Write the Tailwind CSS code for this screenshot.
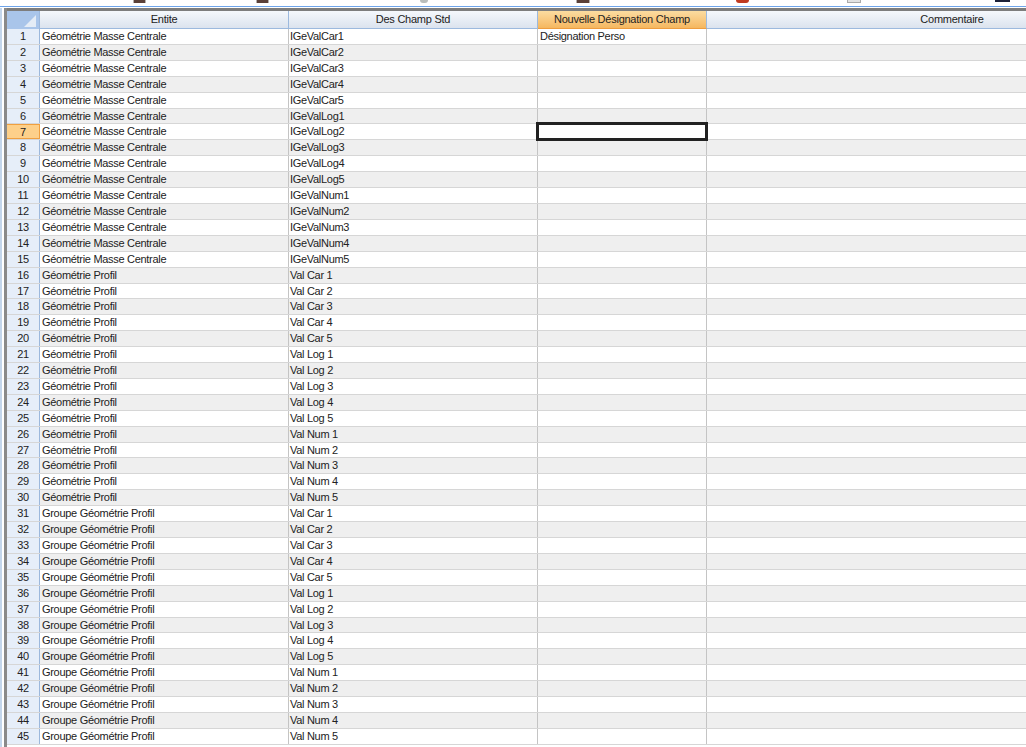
<!DOCTYPE html>
<html><head><meta charset="utf-8"><script src="https://cdn.jsdelivr.net/npm/@tailwindcss/browser@4"></script></head>
<body class="m-0 w-[1026px] h-[747px] overflow-hidden bg-white font-['Liberation_Sans',sans-serif] text-[11px] tracking-[-0.25px] text-[#222]">
<div class="flex h-[6px] items-start overflow-hidden">
<div class="ml-[133px] w-[13px] h-[3px] bg-[#5a4038] border-x border-[#b5b0ac]"></div>
<div class="ml-[110px] w-[13px] h-[3px] bg-[#5a4038] border-x border-[#b5b0ac]"></div>
<div class="ml-[151px] w-[8px] h-[3px] bg-[#b9bdbb] rounded-b"></div>
<div class="ml-[148px] w-[14px] h-[3px] bg-[#5a4038] border-x border-[#b5b0ac]"></div>
<div class="ml-[146px] w-[13px] h-[3px] bg-[#c03a20] rounded-b-full"></div>
<div class="ml-[98px] w-[14px] h-[3px] bg-[#e2e2e2] border border-t-0 border-[#aaa]"></div>
<div class="ml-[134px] w-[15px] h-[2px] bg-[#1b2038]"></div>
</div>
<div class="h-[1px] bg-[#6ea4ea]"></div>
<div class="h-[1px] bg-white"></div>
<div class="flex h-[740px]">
<div class="w-[2px] shrink-0 bg-[#c3d6ec]"></div>
<div class="w-[2px] shrink-0 bg-white"></div>
<div class="w-[3px] shrink-0 bg-[#8a8a8a]"></div>
<div class="flex-1 min-w-0 overflow-hidden">
<div class="h-[3px] -ml-[3px] bg-[#7d7d7d]"></div>
<div class="flex h-[18px]">
<div class="w-[33px] shrink-0 relative bg-[#a9c5ea] border-r border-[#9cb8dc]"><div class="absolute right-[3px] bottom-[2px] w-0 h-0 border-l-[12px] border-b-[12px] border-l-transparent border-b-[#e4ecf6]"></div></div>
<div class="w-[249px] shrink-0 flex items-center justify-center bg-linear-to-b from-[#f5f8fc] to-[#dbe3ee] border-r border-b border-[#9cb9de]">Entite</div>
<div class="w-[249px] shrink-0 flex items-center justify-center bg-linear-to-b from-[#f5f8fc] to-[#dbe3ee] border-r border-b border-[#9cb9de]">Des Champ Std</div>
<div class="w-[169px] shrink-0 flex items-center justify-center bg-linear-to-b from-[#fbdca0] to-[#f5b75f] border-r border-b border-r-[#9cb9de] border-b-[#ee9d3f]">Nouvelle Désignation Champ</div>
<div class="w-[490px] shrink-0 flex items-center justify-center bg-linear-to-b from-[#f5f8fc] to-[#dbe3ee] border-b border-[#9cb9de]">Commentaire</div>
</div>
<div class="tracking-[-0.3px] leading-[15.5px]">
<div class="flex h-[15.91px] bg-white border-b border-[#d6d6d6]"><div class="w-[33px] shrink-0 text-center bg-[#e6eef9] border-r border-[#9cb8dc]">1</div><div class="w-[249px] shrink-0 pl-[2px] border-r border-[#c4c4c4]">Géométrie Masse Centrale</div><div class="w-[249px] shrink-0 pl-[1px] border-r border-[#c4c4c4]">IGeValCar1</div><div class="w-[169px] shrink-0 pl-[2px] border-r border-[#c4c4c4]">Désignation Perso</div></div>
<div class="flex h-[15.91px] bg-[#efefef] border-b border-[#d6d6d6]"><div class="w-[33px] shrink-0 text-center bg-[#e6eef9] border-r border-[#9cb8dc]">2</div><div class="w-[249px] shrink-0 pl-[2px] border-r border-[#c4c4c4]">Géométrie Masse Centrale</div><div class="w-[249px] shrink-0 pl-[1px] border-r border-[#c4c4c4]">IGeValCar2</div><div class="w-[169px] shrink-0 border-r border-[#c4c4c4]"></div></div>
<div class="flex h-[15.91px] bg-white border-b border-[#d6d6d6]"><div class="w-[33px] shrink-0 text-center bg-[#e6eef9] border-r border-[#9cb8dc]">3</div><div class="w-[249px] shrink-0 pl-[2px] border-r border-[#c4c4c4]">Géométrie Masse Centrale</div><div class="w-[249px] shrink-0 pl-[1px] border-r border-[#c4c4c4]">IGeValCar3</div><div class="w-[169px] shrink-0 border-r border-[#c4c4c4]"></div></div>
<div class="flex h-[15.91px] bg-[#efefef] border-b border-[#d6d6d6]"><div class="w-[33px] shrink-0 text-center bg-[#e6eef9] border-r border-[#9cb8dc]">4</div><div class="w-[249px] shrink-0 pl-[2px] border-r border-[#c4c4c4]">Géométrie Masse Centrale</div><div class="w-[249px] shrink-0 pl-[1px] border-r border-[#c4c4c4]">IGeValCar4</div><div class="w-[169px] shrink-0 border-r border-[#c4c4c4]"></div></div>
<div class="flex h-[15.91px] bg-white border-b border-[#d6d6d6]"><div class="w-[33px] shrink-0 text-center bg-[#e6eef9] border-r border-[#9cb8dc]">5</div><div class="w-[249px] shrink-0 pl-[2px] border-r border-[#c4c4c4]">Géométrie Masse Centrale</div><div class="w-[249px] shrink-0 pl-[1px] border-r border-[#c4c4c4]">IGeValCar5</div><div class="w-[169px] shrink-0 border-r border-[#c4c4c4]"></div></div>
<div class="flex h-[15.91px] bg-[#efefef] border-b border-[#d6d6d6]"><div class="w-[33px] shrink-0 text-center bg-[#e6eef9] border-r border-[#9cb8dc]">6</div><div class="w-[249px] shrink-0 pl-[2px] border-r border-[#c4c4c4]">Géométrie Masse Centrale</div><div class="w-[249px] shrink-0 pl-[1px] border-r border-[#c4c4c4]">IGeValLog1</div><div class="w-[169px] shrink-0 border-r border-[#c4c4c4]"></div></div>
<div class="flex h-[15.91px] bg-white border-b border-[#d6d6d6]"><div class="w-[33px] shrink-0 text-center bg-[#fdd08a] border-y border-r border-[#f0a040]">7</div><div class="w-[249px] shrink-0 pl-[2px] border-r border-[#c4c4c4]">Géométrie Masse Centrale</div><div class="w-[249px] shrink-0 pl-[1px] border-r border-[#c4c4c4]">IGeValLog2</div><div class="w-[169px] shrink-0 relative"><div class="absolute -left-[2px] -top-[2px] w-[172px] h-[19px] bg-white border-[3px] border-[#222]"></div></div></div>
<div class="flex h-[15.91px] bg-[#efefef] border-b border-[#d6d6d6]"><div class="w-[33px] shrink-0 text-center bg-[#e6eef9] border-r border-[#9cb8dc]">8</div><div class="w-[249px] shrink-0 pl-[2px] border-r border-[#c4c4c4]">Géométrie Masse Centrale</div><div class="w-[249px] shrink-0 pl-[1px] border-r border-[#c4c4c4]">IGeValLog3</div><div class="w-[169px] shrink-0 border-r border-[#c4c4c4]"></div></div>
<div class="flex h-[15.91px] bg-white border-b border-[#d6d6d6]"><div class="w-[33px] shrink-0 text-center bg-[#e6eef9] border-r border-[#9cb8dc]">9</div><div class="w-[249px] shrink-0 pl-[2px] border-r border-[#c4c4c4]">Géométrie Masse Centrale</div><div class="w-[249px] shrink-0 pl-[1px] border-r border-[#c4c4c4]">IGeValLog4</div><div class="w-[169px] shrink-0 border-r border-[#c4c4c4]"></div></div>
<div class="flex h-[15.91px] bg-[#efefef] border-b border-[#d6d6d6]"><div class="w-[33px] shrink-0 text-center bg-[#e6eef9] border-r border-[#9cb8dc]">10</div><div class="w-[249px] shrink-0 pl-[2px] border-r border-[#c4c4c4]">Géométrie Masse Centrale</div><div class="w-[249px] shrink-0 pl-[1px] border-r border-[#c4c4c4]">IGeValLog5</div><div class="w-[169px] shrink-0 border-r border-[#c4c4c4]"></div></div>
<div class="flex h-[15.91px] bg-white border-b border-[#d6d6d6]"><div class="w-[33px] shrink-0 text-center bg-[#e6eef9] border-r border-[#9cb8dc]">11</div><div class="w-[249px] shrink-0 pl-[2px] border-r border-[#c4c4c4]">Géométrie Masse Centrale</div><div class="w-[249px] shrink-0 pl-[1px] border-r border-[#c4c4c4]">IGeValNum1</div><div class="w-[169px] shrink-0 border-r border-[#c4c4c4]"></div></div>
<div class="flex h-[15.91px] bg-[#efefef] border-b border-[#d6d6d6]"><div class="w-[33px] shrink-0 text-center bg-[#e6eef9] border-r border-[#9cb8dc]">12</div><div class="w-[249px] shrink-0 pl-[2px] border-r border-[#c4c4c4]">Géométrie Masse Centrale</div><div class="w-[249px] shrink-0 pl-[1px] border-r border-[#c4c4c4]">IGeValNum2</div><div class="w-[169px] shrink-0 border-r border-[#c4c4c4]"></div></div>
<div class="flex h-[15.91px] bg-white border-b border-[#d6d6d6]"><div class="w-[33px] shrink-0 text-center bg-[#e6eef9] border-r border-[#9cb8dc]">13</div><div class="w-[249px] shrink-0 pl-[2px] border-r border-[#c4c4c4]">Géométrie Masse Centrale</div><div class="w-[249px] shrink-0 pl-[1px] border-r border-[#c4c4c4]">IGeValNum3</div><div class="w-[169px] shrink-0 border-r border-[#c4c4c4]"></div></div>
<div class="flex h-[15.91px] bg-[#efefef] border-b border-[#d6d6d6]"><div class="w-[33px] shrink-0 text-center bg-[#e6eef9] border-r border-[#9cb8dc]">14</div><div class="w-[249px] shrink-0 pl-[2px] border-r border-[#c4c4c4]">Géométrie Masse Centrale</div><div class="w-[249px] shrink-0 pl-[1px] border-r border-[#c4c4c4]">IGeValNum4</div><div class="w-[169px] shrink-0 border-r border-[#c4c4c4]"></div></div>
<div class="flex h-[15.91px] bg-white border-b border-[#d6d6d6]"><div class="w-[33px] shrink-0 text-center bg-[#e6eef9] border-r border-[#9cb8dc]">15</div><div class="w-[249px] shrink-0 pl-[2px] border-r border-[#c4c4c4]">Géométrie Masse Centrale</div><div class="w-[249px] shrink-0 pl-[1px] border-r border-[#c4c4c4]">IGeValNum5</div><div class="w-[169px] shrink-0 border-r border-[#c4c4c4]"></div></div>
<div class="flex h-[15.91px] bg-[#efefef] border-b border-[#d6d6d6]"><div class="w-[33px] shrink-0 text-center bg-[#e6eef9] border-r border-[#9cb8dc]">16</div><div class="w-[249px] shrink-0 pl-[2px] border-r border-[#c4c4c4]">Géométrie Profil</div><div class="w-[249px] shrink-0 pl-[1px] border-r border-[#c4c4c4]">Val Car 1</div><div class="w-[169px] shrink-0 border-r border-[#c4c4c4]"></div></div>
<div class="flex h-[15.91px] bg-white border-b border-[#d6d6d6]"><div class="w-[33px] shrink-0 text-center bg-[#e6eef9] border-r border-[#9cb8dc]">17</div><div class="w-[249px] shrink-0 pl-[2px] border-r border-[#c4c4c4]">Géométrie Profil</div><div class="w-[249px] shrink-0 pl-[1px] border-r border-[#c4c4c4]">Val Car 2</div><div class="w-[169px] shrink-0 border-r border-[#c4c4c4]"></div></div>
<div class="flex h-[15.91px] bg-[#efefef] border-b border-[#d6d6d6]"><div class="w-[33px] shrink-0 text-center bg-[#e6eef9] border-r border-[#9cb8dc]">18</div><div class="w-[249px] shrink-0 pl-[2px] border-r border-[#c4c4c4]">Géométrie Profil</div><div class="w-[249px] shrink-0 pl-[1px] border-r border-[#c4c4c4]">Val Car 3</div><div class="w-[169px] shrink-0 border-r border-[#c4c4c4]"></div></div>
<div class="flex h-[15.91px] bg-white border-b border-[#d6d6d6]"><div class="w-[33px] shrink-0 text-center bg-[#e6eef9] border-r border-[#9cb8dc]">19</div><div class="w-[249px] shrink-0 pl-[2px] border-r border-[#c4c4c4]">Géométrie Profil</div><div class="w-[249px] shrink-0 pl-[1px] border-r border-[#c4c4c4]">Val Car 4</div><div class="w-[169px] shrink-0 border-r border-[#c4c4c4]"></div></div>
<div class="flex h-[15.91px] bg-[#efefef] border-b border-[#d6d6d6]"><div class="w-[33px] shrink-0 text-center bg-[#e6eef9] border-r border-[#9cb8dc]">20</div><div class="w-[249px] shrink-0 pl-[2px] border-r border-[#c4c4c4]">Géométrie Profil</div><div class="w-[249px] shrink-0 pl-[1px] border-r border-[#c4c4c4]">Val Car 5</div><div class="w-[169px] shrink-0 border-r border-[#c4c4c4]"></div></div>
<div class="flex h-[15.91px] bg-white border-b border-[#d6d6d6]"><div class="w-[33px] shrink-0 text-center bg-[#e6eef9] border-r border-[#9cb8dc]">21</div><div class="w-[249px] shrink-0 pl-[2px] border-r border-[#c4c4c4]">Géométrie Profil</div><div class="w-[249px] shrink-0 pl-[1px] border-r border-[#c4c4c4]">Val Log 1</div><div class="w-[169px] shrink-0 border-r border-[#c4c4c4]"></div></div>
<div class="flex h-[15.91px] bg-[#efefef] border-b border-[#d6d6d6]"><div class="w-[33px] shrink-0 text-center bg-[#e6eef9] border-r border-[#9cb8dc]">22</div><div class="w-[249px] shrink-0 pl-[2px] border-r border-[#c4c4c4]">Géométrie Profil</div><div class="w-[249px] shrink-0 pl-[1px] border-r border-[#c4c4c4]">Val Log 2</div><div class="w-[169px] shrink-0 border-r border-[#c4c4c4]"></div></div>
<div class="flex h-[15.91px] bg-white border-b border-[#d6d6d6]"><div class="w-[33px] shrink-0 text-center bg-[#e6eef9] border-r border-[#9cb8dc]">23</div><div class="w-[249px] shrink-0 pl-[2px] border-r border-[#c4c4c4]">Géométrie Profil</div><div class="w-[249px] shrink-0 pl-[1px] border-r border-[#c4c4c4]">Val Log 3</div><div class="w-[169px] shrink-0 border-r border-[#c4c4c4]"></div></div>
<div class="flex h-[15.91px] bg-[#efefef] border-b border-[#d6d6d6]"><div class="w-[33px] shrink-0 text-center bg-[#e6eef9] border-r border-[#9cb8dc]">24</div><div class="w-[249px] shrink-0 pl-[2px] border-r border-[#c4c4c4]">Géométrie Profil</div><div class="w-[249px] shrink-0 pl-[1px] border-r border-[#c4c4c4]">Val Log 4</div><div class="w-[169px] shrink-0 border-r border-[#c4c4c4]"></div></div>
<div class="flex h-[15.91px] bg-white border-b border-[#d6d6d6]"><div class="w-[33px] shrink-0 text-center bg-[#e6eef9] border-r border-[#9cb8dc]">25</div><div class="w-[249px] shrink-0 pl-[2px] border-r border-[#c4c4c4]">Géométrie Profil</div><div class="w-[249px] shrink-0 pl-[1px] border-r border-[#c4c4c4]">Val Log 5</div><div class="w-[169px] shrink-0 border-r border-[#c4c4c4]"></div></div>
<div class="flex h-[15.91px] bg-[#efefef] border-b border-[#d6d6d6]"><div class="w-[33px] shrink-0 text-center bg-[#e6eef9] border-r border-[#9cb8dc]">26</div><div class="w-[249px] shrink-0 pl-[2px] border-r border-[#c4c4c4]">Géométrie Profil</div><div class="w-[249px] shrink-0 pl-[1px] border-r border-[#c4c4c4]">Val Num 1</div><div class="w-[169px] shrink-0 border-r border-[#c4c4c4]"></div></div>
<div class="flex h-[15.91px] bg-white border-b border-[#d6d6d6]"><div class="w-[33px] shrink-0 text-center bg-[#e6eef9] border-r border-[#9cb8dc]">27</div><div class="w-[249px] shrink-0 pl-[2px] border-r border-[#c4c4c4]">Géométrie Profil</div><div class="w-[249px] shrink-0 pl-[1px] border-r border-[#c4c4c4]">Val Num 2</div><div class="w-[169px] shrink-0 border-r border-[#c4c4c4]"></div></div>
<div class="flex h-[15.91px] bg-[#efefef] border-b border-[#d6d6d6]"><div class="w-[33px] shrink-0 text-center bg-[#e6eef9] border-r border-[#9cb8dc]">28</div><div class="w-[249px] shrink-0 pl-[2px] border-r border-[#c4c4c4]">Géométrie Profil</div><div class="w-[249px] shrink-0 pl-[1px] border-r border-[#c4c4c4]">Val Num 3</div><div class="w-[169px] shrink-0 border-r border-[#c4c4c4]"></div></div>
<div class="flex h-[15.91px] bg-white border-b border-[#d6d6d6]"><div class="w-[33px] shrink-0 text-center bg-[#e6eef9] border-r border-[#9cb8dc]">29</div><div class="w-[249px] shrink-0 pl-[2px] border-r border-[#c4c4c4]">Géométrie Profil</div><div class="w-[249px] shrink-0 pl-[1px] border-r border-[#c4c4c4]">Val Num 4</div><div class="w-[169px] shrink-0 border-r border-[#c4c4c4]"></div></div>
<div class="flex h-[15.91px] bg-[#efefef] border-b border-[#d6d6d6]"><div class="w-[33px] shrink-0 text-center bg-[#e6eef9] border-r border-[#9cb8dc]">30</div><div class="w-[249px] shrink-0 pl-[2px] border-r border-[#c4c4c4]">Géométrie Profil</div><div class="w-[249px] shrink-0 pl-[1px] border-r border-[#c4c4c4]">Val Num 5</div><div class="w-[169px] shrink-0 border-r border-[#c4c4c4]"></div></div>
<div class="flex h-[15.91px] bg-white border-b border-[#d6d6d6]"><div class="w-[33px] shrink-0 text-center bg-[#e6eef9] border-r border-[#9cb8dc]">31</div><div class="w-[249px] shrink-0 pl-[2px] border-r border-[#c4c4c4]">Groupe Géométrie Profil</div><div class="w-[249px] shrink-0 pl-[1px] border-r border-[#c4c4c4]">Val Car 1</div><div class="w-[169px] shrink-0 border-r border-[#c4c4c4]"></div></div>
<div class="flex h-[15.91px] bg-[#efefef] border-b border-[#d6d6d6]"><div class="w-[33px] shrink-0 text-center bg-[#e6eef9] border-r border-[#9cb8dc]">32</div><div class="w-[249px] shrink-0 pl-[2px] border-r border-[#c4c4c4]">Groupe Géométrie Profil</div><div class="w-[249px] shrink-0 pl-[1px] border-r border-[#c4c4c4]">Val Car 2</div><div class="w-[169px] shrink-0 border-r border-[#c4c4c4]"></div></div>
<div class="flex h-[15.91px] bg-white border-b border-[#d6d6d6]"><div class="w-[33px] shrink-0 text-center bg-[#e6eef9] border-r border-[#9cb8dc]">33</div><div class="w-[249px] shrink-0 pl-[2px] border-r border-[#c4c4c4]">Groupe Géométrie Profil</div><div class="w-[249px] shrink-0 pl-[1px] border-r border-[#c4c4c4]">Val Car 3</div><div class="w-[169px] shrink-0 border-r border-[#c4c4c4]"></div></div>
<div class="flex h-[15.91px] bg-[#efefef] border-b border-[#d6d6d6]"><div class="w-[33px] shrink-0 text-center bg-[#e6eef9] border-r border-[#9cb8dc]">34</div><div class="w-[249px] shrink-0 pl-[2px] border-r border-[#c4c4c4]">Groupe Géométrie Profil</div><div class="w-[249px] shrink-0 pl-[1px] border-r border-[#c4c4c4]">Val Car 4</div><div class="w-[169px] shrink-0 border-r border-[#c4c4c4]"></div></div>
<div class="flex h-[15.91px] bg-white border-b border-[#d6d6d6]"><div class="w-[33px] shrink-0 text-center bg-[#e6eef9] border-r border-[#9cb8dc]">35</div><div class="w-[249px] shrink-0 pl-[2px] border-r border-[#c4c4c4]">Groupe Géométrie Profil</div><div class="w-[249px] shrink-0 pl-[1px] border-r border-[#c4c4c4]">Val Car 5</div><div class="w-[169px] shrink-0 border-r border-[#c4c4c4]"></div></div>
<div class="flex h-[15.91px] bg-[#efefef] border-b border-[#d6d6d6]"><div class="w-[33px] shrink-0 text-center bg-[#e6eef9] border-r border-[#9cb8dc]">36</div><div class="w-[249px] shrink-0 pl-[2px] border-r border-[#c4c4c4]">Groupe Géométrie Profil</div><div class="w-[249px] shrink-0 pl-[1px] border-r border-[#c4c4c4]">Val Log 1</div><div class="w-[169px] shrink-0 border-r border-[#c4c4c4]"></div></div>
<div class="flex h-[15.91px] bg-white border-b border-[#d6d6d6]"><div class="w-[33px] shrink-0 text-center bg-[#e6eef9] border-r border-[#9cb8dc]">37</div><div class="w-[249px] shrink-0 pl-[2px] border-r border-[#c4c4c4]">Groupe Géométrie Profil</div><div class="w-[249px] shrink-0 pl-[1px] border-r border-[#c4c4c4]">Val Log 2</div><div class="w-[169px] shrink-0 border-r border-[#c4c4c4]"></div></div>
<div class="flex h-[15.91px] bg-[#efefef] border-b border-[#d6d6d6]"><div class="w-[33px] shrink-0 text-center bg-[#e6eef9] border-r border-[#9cb8dc]">38</div><div class="w-[249px] shrink-0 pl-[2px] border-r border-[#c4c4c4]">Groupe Géométrie Profil</div><div class="w-[249px] shrink-0 pl-[1px] border-r border-[#c4c4c4]">Val Log 3</div><div class="w-[169px] shrink-0 border-r border-[#c4c4c4]"></div></div>
<div class="flex h-[15.91px] bg-white border-b border-[#d6d6d6]"><div class="w-[33px] shrink-0 text-center bg-[#e6eef9] border-r border-[#9cb8dc]">39</div><div class="w-[249px] shrink-0 pl-[2px] border-r border-[#c4c4c4]">Groupe Géométrie Profil</div><div class="w-[249px] shrink-0 pl-[1px] border-r border-[#c4c4c4]">Val Log 4</div><div class="w-[169px] shrink-0 border-r border-[#c4c4c4]"></div></div>
<div class="flex h-[15.91px] bg-[#efefef] border-b border-[#d6d6d6]"><div class="w-[33px] shrink-0 text-center bg-[#e6eef9] border-r border-[#9cb8dc]">40</div><div class="w-[249px] shrink-0 pl-[2px] border-r border-[#c4c4c4]">Groupe Géométrie Profil</div><div class="w-[249px] shrink-0 pl-[1px] border-r border-[#c4c4c4]">Val Log 5</div><div class="w-[169px] shrink-0 border-r border-[#c4c4c4]"></div></div>
<div class="flex h-[15.91px] bg-white border-b border-[#d6d6d6]"><div class="w-[33px] shrink-0 text-center bg-[#e6eef9] border-r border-[#9cb8dc]">41</div><div class="w-[249px] shrink-0 pl-[2px] border-r border-[#c4c4c4]">Groupe Géométrie Profil</div><div class="w-[249px] shrink-0 pl-[1px] border-r border-[#c4c4c4]">Val Num 1</div><div class="w-[169px] shrink-0 border-r border-[#c4c4c4]"></div></div>
<div class="flex h-[15.91px] bg-[#efefef] border-b border-[#d6d6d6]"><div class="w-[33px] shrink-0 text-center bg-[#e6eef9] border-r border-[#9cb8dc]">42</div><div class="w-[249px] shrink-0 pl-[2px] border-r border-[#c4c4c4]">Groupe Géométrie Profil</div><div class="w-[249px] shrink-0 pl-[1px] border-r border-[#c4c4c4]">Val Num 2</div><div class="w-[169px] shrink-0 border-r border-[#c4c4c4]"></div></div>
<div class="flex h-[15.91px] bg-white border-b border-[#d6d6d6]"><div class="w-[33px] shrink-0 text-center bg-[#e6eef9] border-r border-[#9cb8dc]">43</div><div class="w-[249px] shrink-0 pl-[2px] border-r border-[#c4c4c4]">Groupe Géométrie Profil</div><div class="w-[249px] shrink-0 pl-[1px] border-r border-[#c4c4c4]">Val Num 3</div><div class="w-[169px] shrink-0 border-r border-[#c4c4c4]"></div></div>
<div class="flex h-[15.91px] bg-[#efefef] border-b border-[#d6d6d6]"><div class="w-[33px] shrink-0 text-center bg-[#e6eef9] border-r border-[#9cb8dc]">44</div><div class="w-[249px] shrink-0 pl-[2px] border-r border-[#c4c4c4]">Groupe Géométrie Profil</div><div class="w-[249px] shrink-0 pl-[1px] border-r border-[#c4c4c4]">Val Num 4</div><div class="w-[169px] shrink-0 border-r border-[#c4c4c4]"></div></div>
<div class="flex h-[15.91px] bg-white border-b border-[#d6d6d6]"><div class="w-[33px] shrink-0 text-center bg-[#e6eef9] border-r border-[#9cb8dc]">45</div><div class="w-[249px] shrink-0 pl-[2px] border-r border-[#c4c4c4]">Groupe Géométrie Profil</div><div class="w-[249px] shrink-0 pl-[1px] border-r border-[#c4c4c4]">Val Num 5</div><div class="w-[169px] shrink-0 border-r border-[#c4c4c4]"></div></div>
</div>
</div>
</div>
</body></html>
